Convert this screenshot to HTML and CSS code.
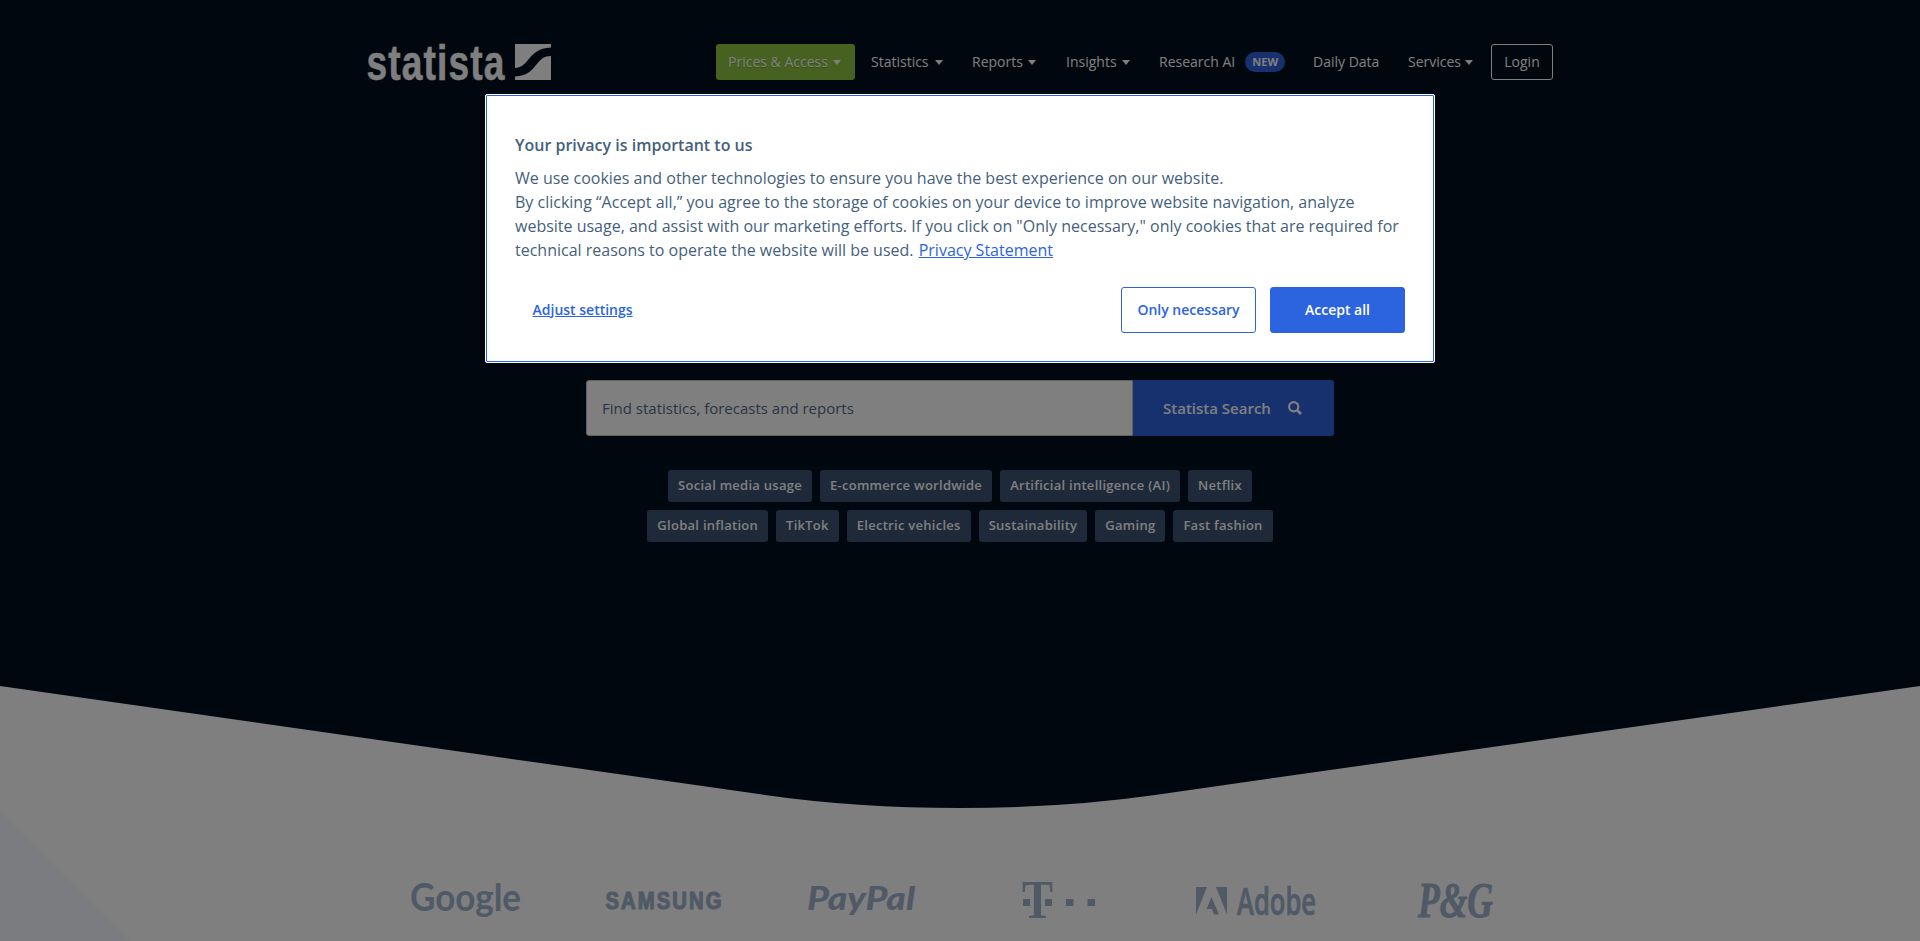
FILE: index.html
```html
<!DOCTYPE html>
<html lang="en">
<head>
<meta charset="utf-8">
<title>Statista</title>
<link rel="stylesheet" href="styles.css">
</head>
<body>
<div class="page">
  <section class="hero">
    <header class="header">
      <a class="logo"><svg width="186" height="38" viewBox="366 43 186 38">
        <text class="logo-word" x="366.500" y="79.5" textLength="139" lengthAdjust="spacingAndGlyphs">statista</text>
        <path fill="#fff" d="M515 44H551V47.500C538 48 533 54 528 60C524 65 521 67.500 515 68Z"/>
        <path fill="#fff" d="M551 56V80H515V76.500C527 76 531 71 536 65C541 59 544 56 551 56Z"/>
      </svg></a>
      <nav class="nav">
        <a class="item prices">Prices &amp; Access<i class="caret"></i></a>
        <a class="item statistics">Statistics<i class="caret"></i></a>
        <a class="item reports">Reports<i class="caret"></i></a>
        <a class="item insights">Insights<i class="caret"></i></a>
        <a class="item research">Research AI<span class="badge">NEW</span></a>
        <a class="item daily">Daily Data</a>
        <a class="item services">Services<i class="caret"></i></a>
        <a class="item login">Login</a>
      </nav>
    </header>
    <div class="search">
      <div class="field">Find statistics, forecasts and reports</div>
      <div class="submit">Statista Search<svg width="14" height="14" viewBox="0 0 14 14" fill="none" stroke="#fff"><circle cx="5.700" cy="5.700" r="4.600" stroke-width="2.200"/><path d="M9 9L13 13" stroke-width="2.600"/></svg></div>
    </div>
    <div class="tags">
      <div class="row"><a>Social media usage</a><a>E-commerce worldwide</a><a>Artificial intelligence (AI)</a><a>Netflix</a></div>
      <div class="row"><a>Global inflation</a><a>TikTok</a><a>Electric vehicles</a><a>Sustainability</a><a>Gaming</a><a>Fast fashion</a></div>
    </div>
  </section>
  <svg class="curve" width="1920" height="123" viewBox="0 686 1920 123"><path d="M0 686L765 795Q856 808 960 808Q1064 808 1155 795L1920 686Z"/></svg>
  <section class="brands">
    <svg width="1920" height="132" viewBox="0 809 1920 132" class="brand-row">
      <path class="wedge" d="M0 811L130 941H0Z"/>
      <text class="google" x="410" y="910.500" textLength="111" lengthAdjust="spacingAndGlyphs">Google</text>
      <text class="samsung" x="605.500" y="908.500" textLength="118" lengthAdjust="spacingAndGlyphs">SAMSUNG</text>
      <text class="paypal" x="807" y="909.500" textLength="108" lengthAdjust="spacingAndGlyphs">PayPal</text>
      <text class="telekom" x="1022" y="918" textLength="31" lengthAdjust="spacingAndGlyphs">T</text>
      <path d="M1023 899h7v7h-7zM1045 899h7v7h-7zM1066 899h7.500v7h-7.500zM1087.500 899h7.500v7h-7.500z"/>
      <path d="M1196 887H1207L1196 914.500ZM1216 887H1227V914.500ZM1211.500 897L1219 914.500H1214L1212 909H1206.500Z"/>
      <text class="adobe" x="1237" y="914.500" textLength="79" lengthAdjust="spacingAndGlyphs">Adobe</text>
      <text class="pg" x="1418" y="916.500" textLength="75" lengthAdjust="spacingAndGlyphs">P&amp;G</text>
    </svg>
  </section>
</div>
<div class="overlay">
  <div class="dialog">
    <h2>Your privacy is important to us</h2>
    <p>We use cookies and other technologies to ensure you have the best experience on our website.<br>By clicking “Accept all,” you agree to the storage of cookies on your device to improve website navigation, analyze<br>website usage, and assist with our marketing efforts. If you click on "Only necessary," only cookies that are required for<br>technical reasons to operate the website will be used. <a class="statement">Privacy Statement</a></p>
    <div class="actions">
      <a class="adjust">Adjust settings</a>
      <button class="btn">Only necessary</button>
      <button class="btn accept">Accept all</button>
    </div>
  </div>
</div>
</body>
</html>
```
FILE: styles.css
```css
* { box-sizing: border-box; }
body { margin: 0; font-family: "Open Sans", sans-serif; }
.page { width: 1920px; height: 941px; overflow: hidden; background: #fff; }
.hero { height: 686px; background: #000e1f; color: #fff; }
.header { display: flex; justify-content: space-between; width: 1188px; margin: 0 auto; padding: 43px 1px 0 0; height: 380px; }
.logo svg { display: block; overflow: visible; }
.logo-word { font: bold 49.5px "Liberation Sans", sans-serif; letter-spacing: 1.5px; fill: #fff; stroke: #fff; stroke-width: .5; }
.nav { display: flex; padding-top: 1px; font-size: 14px; }
.item { display: flex; align-items: center; height: 36px; padding-bottom: 2px; white-space: nowrap; }
.caret { width: 0; height: 0; margin: 3px 0 0 5px; border: 4px solid transparent; border-top: 5px solid #fff; border-bottom: 0; }
.prices { width: 139px; margin-right: 16px; padding-left: 12px; border-radius: 3px; background: #8ec240; text-shadow: 0 1px 1px rgba(0,0,0,.2); }
.statistics { width: 101px; }
.statistics .caret { margin-left: 6px; }
.reports { width: 94px; }
.insights { width: 93px; }
.research { width: 154px; }
.badge { width: 40px; height: 20px; margin: 2px 0 0 10px; border-radius: 10px; background: #2c63dd; font-size: 11px; font-weight: 700; line-height: 20px; text-align: center; }
.daily { width: 95px; }
.services { width: 83px; }
.services .caret { margin-left: 4px; }
.login { width: 62px; justify-content: center; border: 1px solid #fff; border-radius: 3px; }
.search { display: flex; width: 748px; height: 56px; margin: 0 auto; }
.field { width: 547px; padding-left: 15px; border: 1px solid #c0c0c0; border-radius: 3px 0 0 3px; background: #fff; color: #556a87; font-size: 15px; line-height: 54px; }
.submit { flex: 1; display: flex; align-items: center; gap: 17px; padding-left: 30px; border-radius: 0 3px 3px 0; background: #2c63dd; font-size: 15px; font-weight: 600; }
.tags { display: grid; gap: 8px; padding-top: 34px; }
.row { display: flex; justify-content: center; gap: 8px; }
.row a { height: 32px; padding: 0 10px; border-radius: 3px; background: #3c5272; font-size: 13px; font-weight: 600; letter-spacing: .27px; line-height: 31px; }
.curve { display: block; fill: #000e1f; }
.brand-row { display: block; fill: #a0b4ce; }
.wedge { fill: #f6f9fe; }
.google { font: 700 38px Lato, sans-serif; }
.samsung { font: 700 24.5px "Liberation Sans", sans-serif; letter-spacing: 2.5px; stroke: #a0b4ce; stroke-width: 1.2; }
.paypal { font: italic 900 32px Lato, sans-serif; }
.telekom { font: 700 54px "Liberation Serif", serif; }
.adobe { font: 600 37px "Open Sans", sans-serif; stroke: #a0b4ce; stroke-width: .7; }
.pg { font: italic 700 50px "Liberation Serif", serif; stroke: #a0b4ce; stroke-width: 1; }
.overlay { position: absolute; inset: 0; padding-top: 94px; background: rgba(0,0,0,.5); }
.dialog { width: 950px; height: 269px; margin: 0 auto; padding: 38px 29px 0; border: 1px solid #fff; border-radius: 2px; background: #fff; box-shadow: inset 0 0 0 1px #2c64df; color: #455f7c; }
.dialog h2 { margin: 0 0 9px; font-size: 16px; font-weight: 600; line-height: 24px; }
.dialog p { margin: 0; font-size: 16px; line-height: 24px; white-space: nowrap; }
.dialog a { color: #2c64df; text-decoration: underline; }
.statement { margin-left: 1px; }
.actions { display: flex; align-items: center; gap: 14px; margin-top: 25px; font-size: 14px; font-weight: 600; }
.adjust { margin: 0 auto 0 17.5px; padding-bottom: 2px; }
.btn { width: 135px; height: 46px; padding: 0 0 2px; border: 1px solid #2c64df; border-radius: 3px; background: #fff; color: #2c64df; font: inherit; }
.accept { background: #2c64df; color: #fff; }
```
